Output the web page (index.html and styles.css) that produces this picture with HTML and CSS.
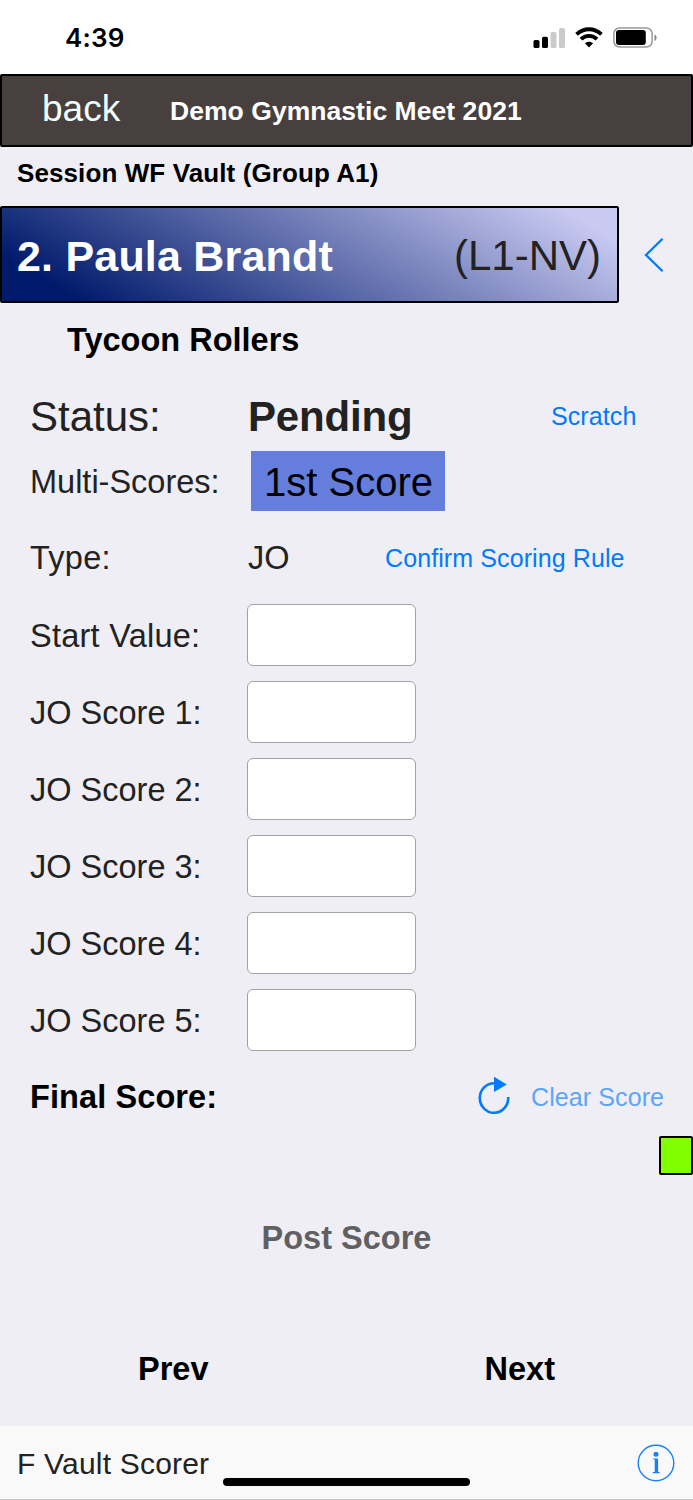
FILE: index.html
```
<!DOCTYPE html>
<html lang="en">
<head>
<meta charset="utf-8">
<title>Vault Scorer</title>
<link rel="stylesheet" href="styles.css">
</head>
<body>
<div class="statusbar">
  <span class="clock">4:39</span>
  <svg class="indicators" width="126" height="24" viewBox="0 0 126 24">
    <g>
      <rect x="0.5" y="14" width="6" height="8" rx="1.6"/>
      <rect x="9" y="10.8" width="6" height="11.2" rx="1.6"/>
      <rect x="17.5" y="6" width="6" height="16" rx="1.6" fill="#cbcbcb"/>
      <rect x="26" y="2" width="6" height="20" rx="1.6" fill="#cbcbcb"/>
    </g>
    <g fill="none" stroke="#000" stroke-width="3.9">
      <path d="M43.6 8.4C50.6 1.6 61.4 1.6 68.4 8.4"/>
      <path d="M48 13.2C52.4 8.8 59.6 8.8 64 13.2"/>
    </g>
    <path d="M51.9 17.3C54.2 15.200 57.8 15.200 60.100 17.300L56 21.600Z"/>
    <rect x="80.900" y="2" width="38.200" height="19" rx="5.500" fill="none" stroke="#999" stroke-width="1.500"/>
    <rect x="83" y="4" width="29.800" height="15" rx="3"/>
    <path d="M121.500 8.500C124.300 9.700 124.300 13.700 121.500 15Z" fill="#888"/>
  </svg>
</div>
<header class="topbar">
  <a class="back">back</a>
  <h1 class="meet">Demo Gymnastic Meet 2021</h1>
</header>
<main class="content">
  <div class="session">Session WF Vault (Group A1)</div>
  <div class="athlete-row">
    <div class="athlete"><span class="name">2. Paula Brandt</span><span class="level">(L1-NV)</span></div>
    <svg class="chevron" width="22" height="36" viewBox="0 0 22 36"><path d="M19.600 1.800L3 18L19.600 34.200" fill="none" stroke="#007aff" stroke-width="2.300"/></svg>
  </div>
  <div class="team">Tycoon Rollers</div>
  <div class="row status"><span class="label big">Status:</span><b class="pending">Pending</b><a class="link scratch">Scratch</a></div>
  <div class="row multi"><span class="label">Multi-Scores:</span><span class="chip">1st Score</span></div>
  <div class="row type"><span class="label wide">Type:</span><span class="kind">JO</span><a class="link">Confirm Scoring Rule</a></div>
  <div class="row"><span class="label wide">Start Value:</span><input class="field" aria-label="Start Value"></div>
  <div class="row"><span class="label">JO Score 1:</span><input class="field" aria-label="JO Score 1"></div>
  <div class="row"><span class="label">JO Score 2:</span><input class="field" aria-label="JO Score 2"></div>
  <div class="row"><span class="label">JO Score 3:</span><input class="field" aria-label="JO Score 3"></div>
  <div class="row"><span class="label">JO Score 4:</span><input class="field" aria-label="JO Score 4"></div>
  <div class="row"><span class="label">JO Score 5:</span><input class="field" aria-label="JO Score 5"></div>
  <div class="row final">
    <b class="final-label">Final Score:</b>
    <svg class="refresh" width="34" height="38" viewBox="0 0 34 38"><path d="M16 7.200A14.200 14.800 0 1 0 30.200 21" fill="none" stroke="#007aff" stroke-width="2.600"/><path d="M16 0.800L28.800 8.400L16 16Z" fill="#007aff"/></svg>
    <a class="link clear">Clear Score</a>
  </div>
  <div class="signal"></div>
  <div class="post">Post Score</div>
  <nav class="pager"><a>Prev</a><a>Next</a></nav>
</main>
<footer class="footer">
  <span class="scorer">F Vault Scorer</span>
  <svg class="info" width="38" height="38" viewBox="0 0 38 38"><g fill="none" stroke="#1a80f6"><circle cx="19" cy="19" r="17.800" stroke-width="1.400"/><path d="M19.400 15V28.600" stroke-width="3.400"/><path d="M16.200 15H20.500M15.800 28.700H22.600" stroke-width="1.200"/></g><circle cx="19" cy="10.300" r="2.500" fill="#1a80f6"/></svg>
  <div class="home"></div>
</footer>
</body>
</html>
```
FILE: styles.css
```
* { box-sizing: border-box; }
body {
  margin: 0;
  width: 693px;
  height: 1500px;
  overflow: hidden;
  background: #efeef5;
  color: #222;
  font-family: "Liberation Sans", Arial, sans-serif;
  white-space: nowrap;
}
.statusbar {
  display: flex;
  justify-content: space-between;
  height: 74px;
  padding: 22px 34px 0 65px;
  background: #fff;
}
.clock {
  color: #000;
  font: 600 26px/31px Inter, sans-serif;
  letter-spacing: 0.2px;
}
.indicators { margin-top: 4px; }
.topbar {
  display: flex;
  height: 73px;
  padding-left: 40px;
  border: 2px solid #000;
  border-radius: 2px;
  background: #483f3f;
}
.back {
  width: 128px;
  color: #f0ffff;
  font-size: 37px;
  line-height: 65px;
}
.meet {
  margin: 0;
  color: #fff;
  font-size: 26.5px;
  line-height: 71px;
  letter-spacing: 0.05px;
}
.session {
  height: 59px;
  padding-left: 17px;
  color: #000;
  font-size: 26px;
  font-weight: bold;
  line-height: 53px;
  letter-spacing: 0.1px;
}
.athlete-row { display: flex; align-items: center; height: 97px; }
.athlete {
  display: flex;
  justify-content: space-between;
  width: 619px;
  height: 97px;
  padding: 0 16px 0 15px;
  border: 2px solid #000;
  border-radius: 2px;
  background: linear-gradient(30deg, #001a6b 10%, #c9caf2 93%);
  line-height: 96px;
}
.name { color: #fff; font-size: 43px; font-weight: bold; letter-spacing: 0.2px; }
.level { font-size: 42px; }
.chevron { margin-left: 24px; }
.team {
  height: 79px;
  padding-left: 67px;
  color: #000;
  font-size: 32.5px;
  font-weight: bold;
  line-height: 75px;
}
.row { display: flex; align-items: center; height: 77px; padding-left: 30px; }
.label { width: 217px; padding-top: 3px; font-size: 32.5px; }
.wide { letter-spacing: 0.25px; }
.big { padding-top: 1px; font-size: 42px; }
.status { height: 68px; }
.pending { width: 304px; padding: 1px 0 0 1px; font-size: 42px; letter-spacing: -0.15px; }
.link { color: #007aff; font-size: 25px; letter-spacing: 0.1px; }
.multi { height: 61px; }
.chip {
  width: 194px;
  height: 60px;
  margin-left: 4px;
  padding-left: 13px;
  background: #657edd;
  color: #000;
  font-size: 40px;
  line-height: 63px;
}
.type { height: 76px; margin-top: 9px; }
.type .label { padding-top: 1px; }
.kind { width: 138px; padding: 1px 0 0 1px; font-size: 32.5px; }
.field {
  width: 169px;
  height: 62px;
  padding: 0 12px;
  border: 1.5px solid #a2a1a8;
  border-radius: 6px;
  background: #fff;
  font: 32px "Liberation Sans", Arial, sans-serif;
}
.final { height: 78px; }
.final-label { width: 447px; padding-top: 1px; color: #000; font-size: 32.5px; letter-spacing: 0.1px; }
.refresh { margin: -4px 0 0 1px; }
.clear { margin-left: 19px; opacity: 0.62; }
.signal {
  width: 34px;
  height: 39px;
  margin-left: auto;
  border: 2px solid #000;
  border-radius: 2px;
  background: #80ff00;
}
.post {
  height: 136px;
  color: #606062;
  font-size: 32.5px;
  font-weight: bold;
  line-height: 127px;
  text-align: center;
}
.pager {
  display: grid;
  grid-template-columns: 1fr 1fr;
  height: 115px;
  color: #000;
  font-size: 32.5px;
  font-weight: bold;
  line-height: 117px;
  text-align: center;
}
.footer {
  position: relative;
  display: flex;
  align-items: center;
  justify-content: space-between;
  height: 74px;
  padding: 0 18px 0 17px;
  border-bottom: 1px solid #c8c8ca;
  background: #f9f9f9;
}
.scorer { padding-top: 2px; font-size: 30px; letter-spacing: 0.2px; }
.home {
  position: absolute;
  bottom: 13px;
  left: 223px;
  width: 247px;
  height: 8px;
  border-radius: 4px;
  background: #000;
}
```
